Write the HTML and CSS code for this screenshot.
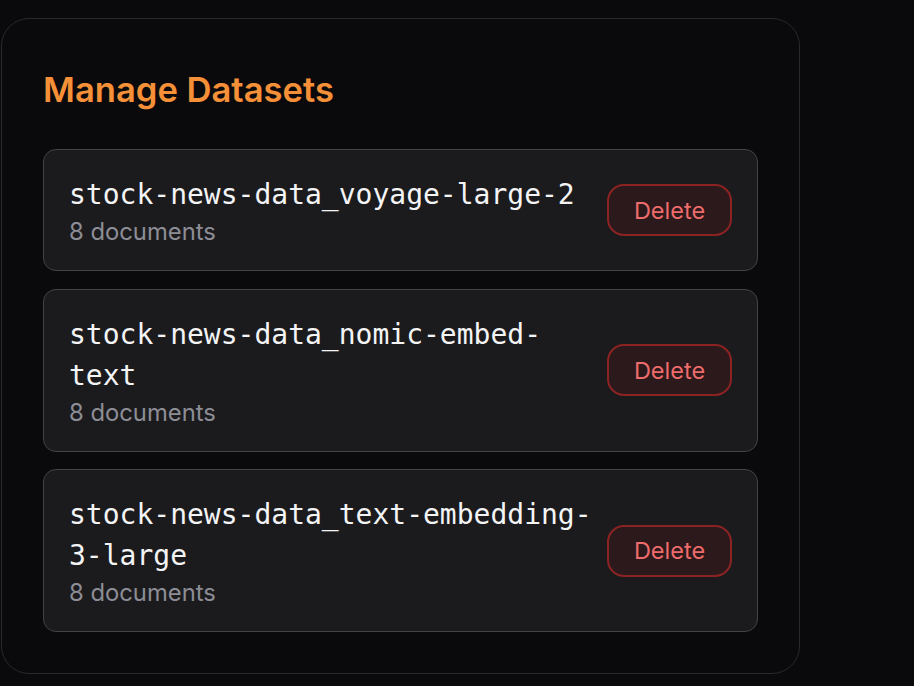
FILE: index.html
```html
<!DOCTYPE html>
<html lang="en">
<head>
<meta charset="utf-8">
<title>Manage Datasets</title>
<link rel="stylesheet" href="styles.css">
</head>
<body>
  <section class="panel">
    <h2 class="title">Manage Datasets</h2>
    <div class="list">
      <div class="card">
        <div class="info">
          <div class="name">stock-news-data_voyage-large-2</div>
          <div class="count">8 documents</div>
        </div>
        <button class="delete">Delete</button>
      </div>
      <div class="card">
        <div class="info">
          <div class="name">stock-news-data_nomic-embed-text</div>
          <div class="count">8 documents</div>
        </div>
        <button class="delete">Delete</button>
      </div>
      <div class="card">
        <div class="info">
          <div class="name">stock-news-data_text-embedding-3-large</div>
          <div class="count">8 documents</div>
        </div>
        <button class="delete">Delete</button>
      </div>
    </div>
  </section>
</body>
</html>
```

FILE: styles.css
```css
html, body {
  margin: 0;
  background: #0a0a0c;
}
body {
  padding: 18px 0 0 1px;
  font-family: Inter, "Noto Sans", sans-serif;
}
.panel {
  box-sizing: border-box;
  width: 799px;
  padding: 41px;
  border: 1px solid #2a2a2d;
  border-radius: 28px;
  background: #0a0a0c;
}
.title {
  margin: 0 0 31px;
  font-size: 34.6px;
  line-height: 58px;
  font-weight: 600;
  color: #f59038;
}
.list {
  display: flex;
  flex-direction: column;
  gap: 17.5px;
}
.card {
  display: flex;
  align-items: center;
  gap: 12px;
  padding: 24px 25px;
  background: #1b1b1e;
  border: 1px solid #424248;
  border-radius: 13px;
}
.info {
  flex: 1;
  min-width: 0;
}
.name {
  font-family: "DejaVu Sans Mono", monospace;
  font-size: 28px;
  line-height: 41px;
  color: #f4f4f5;
}
.count {
  margin-top: 2px;
  font-size: 23.8px;
  line-height: 29px;
  color: #8d8d95;
}
.delete {
  flex: none;
  width: 125px;
  height: 52px;
  padding: 0;
  font-family: Inter, "Noto Sans", sans-serif;
  font-size: 23.5px;
  color: #ee6b6b;
  background: #2b191b;
  border: 2px solid #8c2323;
  border-radius: 17px;
}
```
